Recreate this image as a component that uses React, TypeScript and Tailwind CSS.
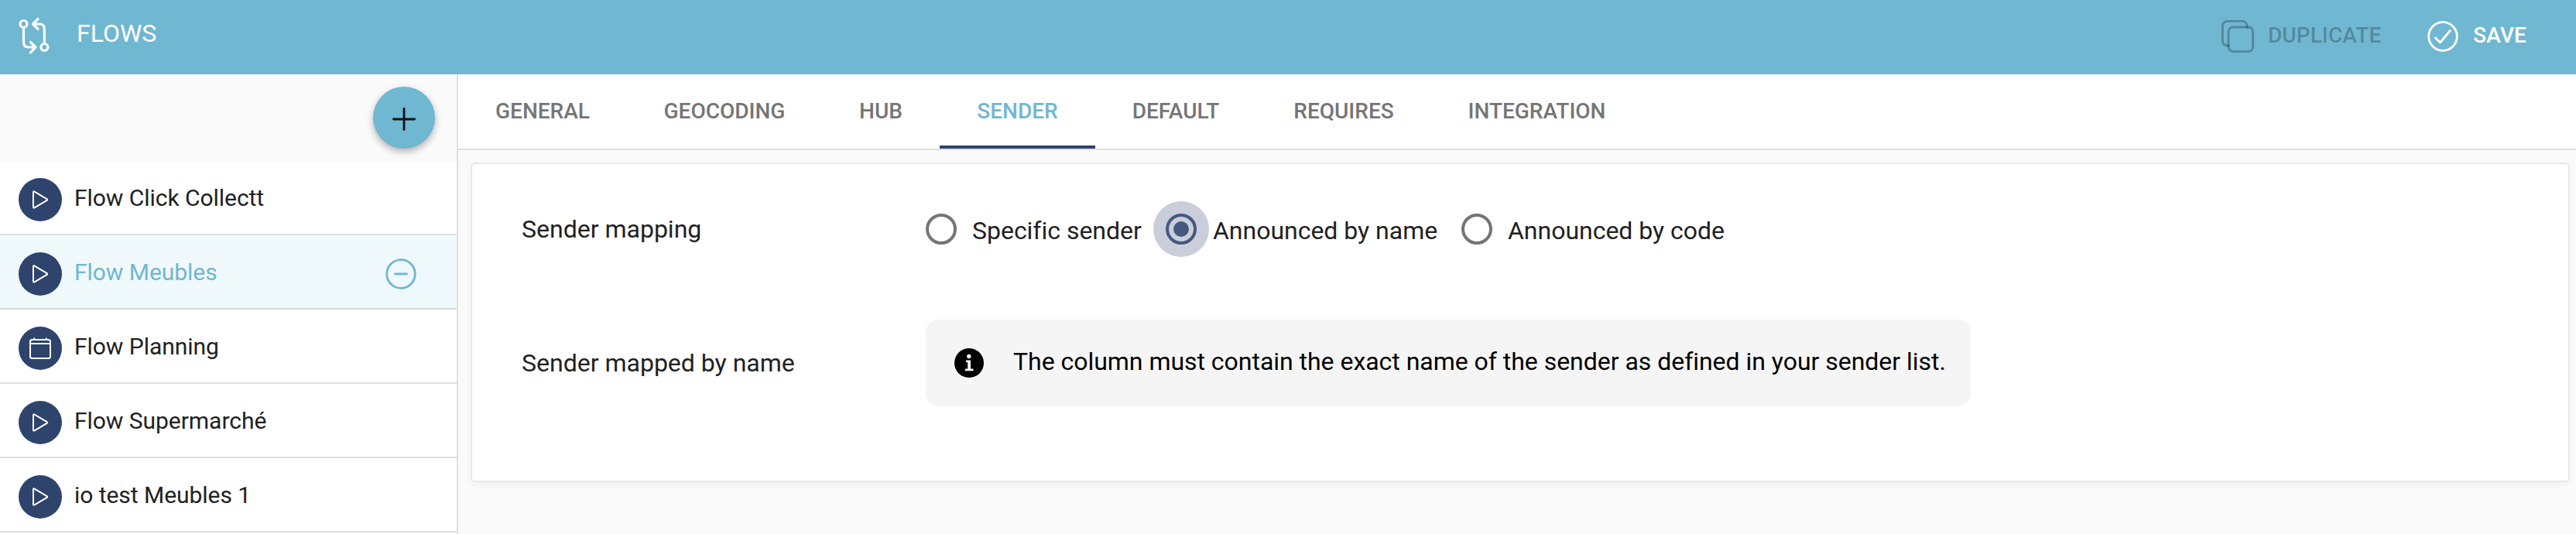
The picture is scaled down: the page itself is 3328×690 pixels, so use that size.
import React, { useState } from "react";

type FlowType = "play" | "calendar";

interface Flow {
  id: number;
  name: string;
  type: FlowType;
}

interface RadioProps {
  label: string;
  checked: boolean;
  className?: string;
  onSelect: () => void;
}

const FLOWS: Flow[] = [
  { id: 1, name: "Flow Click Collectt", type: "play" },
  { id: 2, name: "Flow Meubles", type: "play" },
  { id: 3, name: "Flow Planning", type: "calendar" },
  { id: 4, name: "Flow Supermarché", type: "play" },
  { id: 5, name: "io test Meubles 1", type: "play" },
];

const TABS = [
  { label: "GENERAL", width: "w-[218px]" },
  { label: "GEOCODING", width: "w-[252px]" },
  { label: "HUB", width: "w-[152px]" },
  { label: "SENDER", width: "w-[201px]" },
  { label: "DEFAULT", width: "w-[208px]" },
  { label: "REQUIRES", width: "w-[226px]" },
  { label: "INTEGRATION", width: "w-[273px]" },
];

const SENDER_OPTIONS = [
  { label: "Specific sender", className: "w-[310px]" },
  { label: "Announced by name", className: "w-[382px]" },
  { label: "Announced by code", className: "" },
];

const FlowsIcon = () => (
  <svg width="42" height="54" viewBox="0 0 42 54" fill="none" stroke="white" strokeWidth="3.2" strokeLinecap="round" strokeLinejoin="round">
    <circle cx="7.5" cy="10" r="4.5" />
    <path d="M7.5 15v18.5q0 6.5 6.5 6.5h9" />
    <path d="M16.5 33.5L23 40l-6.5 6.8" />
    <circle cx="34.4" cy="40" r="4.5" />
    <path d="M34.4 35V16.5q0-6.5-6.5-6.5h-8" />
    <path d="M26 3.5L19.5 10l6.5 6.5" />
  </svg>
);

const DuplicateIcon = () => (
  <svg width="42" height="42" viewBox="0 0 42 42" fill="none" stroke="black" strokeOpacity="0.26" strokeWidth="2.8">
    <path d="M10.5 33H7.4a6 6 0 0 1-6-6V7.4a6 6 0 0 1 6-6H27a6 6 0 0 1 6 6v3.1" />
    <rect x="9" y="9" width="31.6" height="31.6" rx="6" />
  </svg>
);

const SaveIcon = () => (
  <svg width="40" height="40" viewBox="0 0 40 40" fill="none" stroke="white" strokeWidth="2.8" strokeLinecap="round" strokeLinejoin="round">
    <circle cx="20" cy="20" r="18.3" />
    <path d="M10.5 22l6 6L29.5 12.5" />
  </svg>
);

const FlowTypeIcon = ({ type }: { type: FlowType }) =>
  type === "play" ? (
    <svg width="56" height="56" viewBox="0 0 56 56" fill="none" stroke="white" strokeWidth="2" strokeLinejoin="round">
      <path d="M19 18.5q0-1.8 1.6-.8l16 9.5q1.300.8 0 1.600L20.600 38.300q-1.600.9-1.600-.8z" />
    </svg>
  ) : (
    <svg width="56" height="56" viewBox="0 0 56 56" fill="none" stroke="white" strokeWidth="2" strokeLinecap="round">
      <rect x="15" y="17" width="26" height="24" rx="2.5" />
      <path d="M15 22h26M20.2 15.3v1.5M35.8 15.3v1.5" />
    </svg>
  );

const InfoIcon = () => (
  <svg width="38" height="38" viewBox="0 0 38 38">
    <circle cx="19" cy="19" r="19" fill="black" />
    <circle cx="18.8" cy="10.5" r="2.7" fill="#f5f5f5" />
    <path d="M15 15.5h6v11h3.5v2.8H13.8v-2.8h3.4v-8.2H15z" fill="#f5f5f5" />
  </svg>
);

const Radio: React.FC<RadioProps> = ({ label, checked, className = "", onSelect }) => (
  <button
    type="button"
    role="radio"
    aria-checked={checked}
    onClick={onSelect}
    className={`flex h-[72px] items-center whitespace-nowrap ${className}`}
  >
    {checked ? (
      <span className="-mx-4 flex size-[72px] items-center justify-center rounded-full bg-[#cacedb]">
        <span className="flex size-10 items-center justify-center rounded-full border-4 border-[#45587f]">
          <span className="size-5 rounded-full bg-[#45587f]" />
        </span>
      </span>
    ) : (
      <span className="size-10 rounded-full border-4 border-[#757575]" />
    )}
    <span className={`pt-1 tracking-[-0.02px] ${checked ? "ml-[21px]" : "ml-5"}`}>{label}</span>
  </button>
);

const App: React.FC = () => {
  const [selectedFlow, setSelectedFlow] = useState(2);
  const [activeTab, setActiveTab] = useState("SENDER");
  const [mapping, setMapping] = useState("Announced by name");

  return (
    <div className="flex h-[690px] w-[3328px] flex-col overflow-hidden bg-[#fafafa] font-['Roboto',sans-serif] text-[32px] leading-10 text-[#212121]">
      {/* Header */}
      <header className="flex h-24 shrink-0 items-center bg-[#70b7d1] pr-16 pl-[23px] text-white">
        <FlowsIcon />
        <h1 className="ml-[34px] pb-2.5">FLOWS</h1>
        <div className="ml-auto flex items-center pb-0.5 text-[28px] font-medium tracking-[0.1px]">
          <button type="button" disabled className="flex items-center gap-[18px] text-black/26">
            <DuplicateIcon />
            <span className="pb-0.5">DUPLICATE</span>
          </button>
          <button type="button" className="ml-[60px] flex items-center gap-[19px]">
            <SaveIcon />
            <span className="pb-0.5">SAVE</span>
          </button>
        </div>
      </header>

      <div className="flex min-h-0 flex-1">
        {/* Flow list */}
        <aside className="w-[592px] shrink-0 border-r-2 border-[#e0e0e0]">
          <div className="flex h-28 justify-end pt-4 pr-7">
            <button
              type="button"
              aria-label="Add"
              className="flex size-20 items-center justify-center rounded-full bg-[#70b7d1] shadow-[0_4px_10px_rgba(0,0,0,0.3)]"
            >
              <svg width="30" height="30" viewBox="0 0 30 30" className="mt-1" stroke="#111" strokeWidth="2.8" strokeLinecap="round">
                <path d="M15 1.4v27.2M1.4 15h27.2" />
              </svg>
            </button>
          </div>
          <ul>
            {FLOWS.map((flow) => {
              const selected = flow.id === selectedFlow;
              return (
                <li
                  key={flow.id}
                  onClick={() => setSelectedFlow(flow.id)}
                  className={`flex h-24 items-center border-b-2 pr-[52px] pl-6 text-[30px] ${
                    selected
                      ? "border-[#d3dcde] bg-[#eff8fa] text-[#70b7d1]"
                      : "border-[#e0e0e0] bg-white"
                  }`}
                >
                  <span className="mt-1.5 size-14 rounded-full bg-[#2f446c]">
                    <FlowTypeIcon type={flow.type} />
                  </span>
                  <span className="ml-4 pt-0.5 tracking-[-0.04px]">{flow.name}</span>
                  {selected && (
                    <svg width="40" height="40" viewBox="0 0 40 40" className="mt-1.5 ml-auto" fill="none" stroke="#70b7d1" strokeWidth="2.8" strokeLinecap="round">
                      <circle cx="20" cy="20" r="18.3" />
                      <path d="M12.5 20h15" />
                    </svg>
                  )}
                </li>
              );
            })}
          </ul>
        </aside>

        {/* Flow detail */}
        <main className="min-w-0 flex-1">
          <nav className="flex h-[98px] border-b-2 border-[#e0e0e0] bg-white">
            {TABS.map((tab) => (
              <button
                key={tab.label}
                type="button"
                onClick={() => setActiveTab(tab.label)}
                className={`flex h-24 items-center justify-center border-b-4 pt-[3px] text-[28px] font-medium ${tab.width} ${
                  activeTab === tab.label
                    ? "border-[#2f446c] text-[#70b7d1]"
                    : "border-transparent text-[#757575]"
                }`}
              >
                {tab.label}
              </button>
            ))}
          </nav>

          <section className="mt-4 mr-2 ml-4 h-[413px] rounded-md border-2 border-[#e8e8e8] bg-white pt-12 pl-16 shadow-[0_4px_10px_rgba(0,0,0,0.04)]">
            <div className="flex h-[72px] items-center">
              <div className="w-[522px]">Sender mapping</div>
              <div role="radiogroup" className="flex">
                {SENDER_OPTIONS.map((option) => (
                  <Radio
                    key={option.label}
                    label={option.label}
                    className={option.className}
                    checked={mapping === option.label}
                    onSelect={() => setMapping(option.label)}
                  />
                ))}
              </div>
            </div>
            <div className="mt-[81px] flex h-28 items-center">
              <div className="w-[522px]">Sender mapped by name</div>
              <div className="flex h-28 w-[1350px] items-center rounded-2xl bg-[#f5f5f5] pl-[37px] text-black">
                <InfoIcon />
                <p className="ml-[38px] pb-1 tracking-[-0.03px] whitespace-nowrap">
                  The column must contain the exact name of the sender as defined in your sender list.
                </p>
              </div>
            </div>
          </section>
        </main>
      </div>
    </div>
  );
};

export default App;
